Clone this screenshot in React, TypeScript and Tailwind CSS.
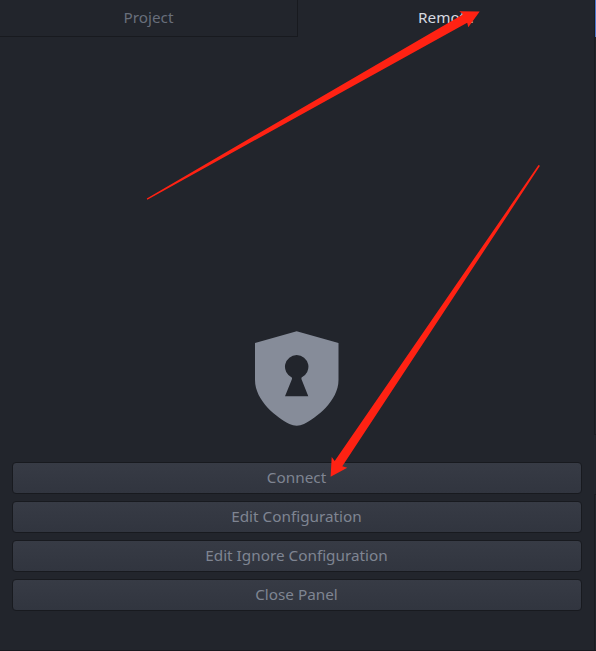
const actions = ['Connect', 'Edit Configuration', 'Edit Ignore Configuration', 'Close Panel'];

function Shield() {
  return (
    <svg width="84" height="95" viewBox="0 0 84 95" className="shrink-0">
      <path
        fill="#868c99"
        fillRule="evenodd"
        d="M41.7 0.2L83.5 12V49C83.5 70 61 87 49 93Q41.7 96.5 34.4 93C22.4 87 0 70 0 49V12ZM41.7 24A11.8 11.8 0 0 0 36.8 46.5Q37.2 47.4 36.8 48.6L30 65.2H53.3L46.6 48.6Q46.2 47.4 46.6 46.5A11.8 11.8 0 0 0 41.7 24Z"
      />
    </svg>
  );
}

function Arrows() {
  return (
    <svg width="596" height="651" viewBox="0 0 596 651" className="pointer-events-none absolute left-0 top-0">
      <g fill="#ff2213">
        <path d="M146.8 198.4L463.2 14.2L459.2 11.2L479.7 11.4L468.3 27.3L467.2 22.7L147.3 199.8Z" />
        <path d="M538.5 165L540 165.8L342.3 466.3L347.3 467.7L330.6 476.8L331.7 457L334.7 461Z" />
      </g>
    </svg>
  );
}

export default function App() {
  return (
    <div className="relative flex h-[651px] w-[596px] flex-col overflow-hidden bg-[#22252c] font-['Noto_Sans','Open_Sans',sans-serif] text-[15.3px]">
      <div className="flex h-[37px] w-full shrink-0 leading-[35px]">
        <div className="w-[298px] border-b border-r border-[#181a1f] text-center text-[#686e7b]">Project</div>
        <div className="w-[297px] border-r border-[#191c21] text-center text-[#d7dae0]">Remote</div>
        <div className="w-px bg-[#4d78cc]" />
      </div>
      <div className="flex flex-1">
        <div className="flex w-[594px] flex-col pl-3">
          <div className="flex h-[425px] items-start pl-[243px] pt-[294px]">
            <Shield />
          </div>
          <div className="flex flex-col gap-[7px]">
            {actions.map((label) => (
              <button
                key={label}
                className="h-8 w-[570px] rounded-[4px] border border-[#181a1f] bg-linear-to-b from-[#373b45] to-[#31353f] pb-[2px] pr-px text-[#7f8592]"
              >
                {label}
              </button>
            ))}
          </div>
        </div>
        <div className="flex w-0.5 flex-col justify-between">
          <div className="h-[398px] border-b border-l border-[#1a1c21]" />
          <div className="h-[156px] border-l border-t border-[#1a1c21]" />
        </div>
      </div>
      <div className="h-px bg-[#181a1f]" />
      <Arrows />
    </div>
  );
}
